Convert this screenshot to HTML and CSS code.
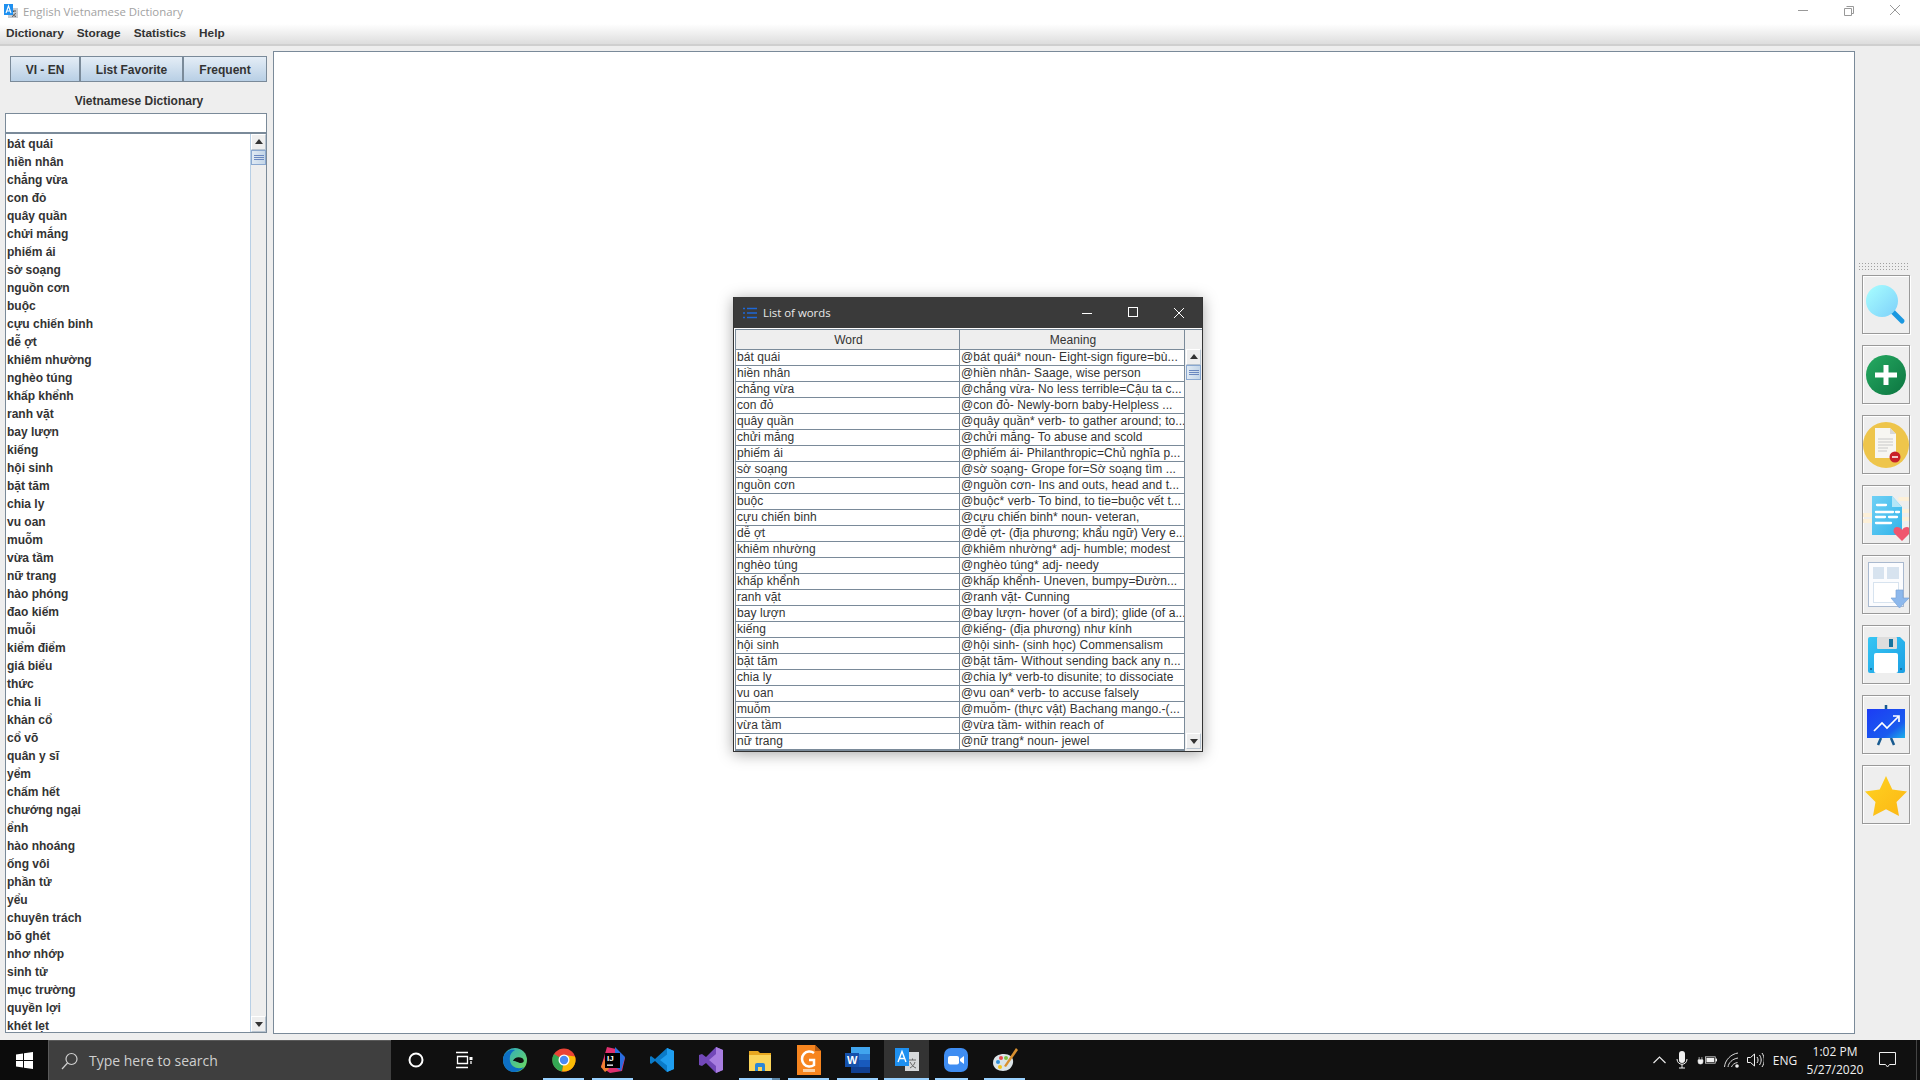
FILE: index.html
```html
<!DOCTYPE html>
<html lang="vi">
<head>
<meta charset="utf-8">
<title>English Vietnamese Dictionary</title>
<link rel="stylesheet" href="styles.css">
</head>
<body>
<header class="titlebar">
  <svg class="app-icon" width="16" height="16" viewBox="0 0 16 16"><rect x="5" y="5" width="10" height="10" fill="#c9ccd0"/><path d="M8 8h5M10.500 8v1M9 10c1 2 2 3 4 3.500M12.500 10c-.6 1.600-1.800 3-3.500 3.500" stroke="#555" fill="none"/><rect x="1" y="1" width="9" height="11" fill="#1e90f0"/><path d="M3 10l2.500-7L8 10M3.800 8h3.400" stroke="#fff" fill="none" stroke-width="1.100"/></svg>
  <span class="app-title">English Vietnamese Dictionary</span>
  <div class="win-controls">
    <svg width="46" height="24" viewBox="0 0 46 24"><path d="M18 10.500h10" stroke="#999"/></svg>
    <svg width="46" height="24" viewBox="0 0 46 24"><path d="M20.500 6.500h7v7h-2M18.500 8.500h7v7h-7z" stroke="#999" fill="none"/></svg>
    <svg width="46" height="24" viewBox="0 0 46 24"><path d="M18 5l10 10M28 5L18 15" stroke="#999" fill="none"/></svg>
  </div>
</header>
<nav class="menubar"><span>Dictionary</span><span>Storage</span><span>Statistics</span><span>Help</span></nav>
<div class="workspace">
  <aside class="left">
    <div class="tabs"><button class="tab t1">VI - EN</button><button class="tab t2">List Favorite</button><button class="tab t3">Frequent</button></div>
    <div class="dict-label">Vietnamese Dictionary</div>
    <div class="search-input"></div>
    <div class="listbox">
      <ul class="words">
        <li>bát quái</li><li>hiền nhân</li><li>chẳng vừa</li><li>con đỏ</li><li>quây quần</li><li>chửi mắng</li><li>phiếm ái</li><li>sờ soạng</li><li>nguồn cơn</li><li>buộc</li>
        <li>cựu chiến binh</li><li>dễ ợt</li><li>khiêm nhường</li><li>nghèo túng</li><li>khấp khểnh</li><li>ranh vặt</li><li>bay lượn</li><li>kiếng</li><li>hội sinh</li><li>bặt tăm</li>
        <li>chia ly</li><li>vu oan</li><li>muỗm</li><li>vừa tầm</li><li>nữ trang</li><li>hào phóng</li><li>đao kiếm</li><li>muỗi</li><li>kiểm điểm</li><li>giá biểu</li>
        <li>thức</li><li>chia li</li><li>khản cổ</li><li>cổ võ</li><li>quân y sĩ</li><li>yểm</li><li>chấm hết</li><li>chướng ngại</li><li>ểnh</li><li>hào nhoáng</li>
        <li>ống vôi</li><li>phần tử</li><li>yểu</li><li>chuyên trách</li><li>bõ ghét</li><li>nhơ nhớp</li><li>sinh tử</li><li>mục trường</li><li>quyền lợi</li><li>khét lẹt</li>
      </ul>
      <div class="scrollbar sb-large">
        <div class="sb-btn"><i class="arrow up"></i></div>
        <div class="sb-thumb"><i></i><i></i><i></i></div>
        <div class="sb-track"></div>
        <div class="sb-btn"><i class="arrow down"></i></div>
      </div>
    </div>
  </aside>
  <main class="canvas"></main>
  <aside class="toolbar">
    <div class="grip"></div>
    <button class="tool"><svg width="46" height="57" viewBox="1 1 46 57"><defs><linearGradient id="g1" x1="0" y1="0" x2="1" y2="1"><stop offset="0" stop-color="#a8ffff"/><stop offset="1" stop-color="#7ed0fa"/></linearGradient></defs><path d="M31 37l9 9" stroke="#1a98e0" stroke-width="5" stroke-linecap="round"/><circle cx="20" cy="26" r="16" fill="url(#g1)"/></svg></button>
    <button class="tool"><svg width="46" height="57" viewBox="1 1 46 57"><defs><linearGradient id="g2" x1="0" y1="0" x2="1" y2="1"><stop offset="0" stop-color="#26ab62"/><stop offset="1" stop-color="#0c7440"/></linearGradient></defs><circle cx="24" cy="30" r="20" fill="url(#g2)"/><path d="M24 20v20M13 30h22" stroke="#fff" stroke-width="5"/></svg></button>
    <button class="tool"><svg width="46" height="57" viewBox="1 1 46 57"><circle cx="24" cy="30" r="23" fill="#eec54b"/><path d="M13 13h15l6 6v24H13z" fill="#f7f6f2"/><path d="M28 13l6 6h-6z" fill="#d8d8d8"/><path d="M16 24h15M16 27h15M16 30h15M16 33h10M16 36h9" stroke="#c8c8c8"/><circle cx="33" cy="42" r="5.500" fill="#c8202a"/><path d="M30 42h6" stroke="#fff" stroke-width="1.500"/></svg></button>
    <button class="tool"><svg width="46" height="57" viewBox="1 1 46 57"><defs><linearGradient id="g4" x1="0" y1="0" x2="1" y2="1"><stop offset="0" stop-color="#6fd0f5"/><stop offset="1" stop-color="#31b4ea"/></linearGradient></defs><path d="M2 30h8M2 36h8M38 14h10M40 26h8M40 34h8" stroke="#fdf0d8" stroke-width="4" stroke-linecap="round"/><path d="M10 11h20l10 11v28H10z" fill="url(#g4)"/><path d="M30 11l10 11H30z" fill="#b3e6f8"/><path d="M15 20h9M14 27h17M34 27h3M14 32h9M27 32h8M14 38h15" stroke="#fff" stroke-width="2.300" stroke-linecap="round"/><path d="M40 56l-7-7c-3-3-1-7 2-7 2 0 4 1 5 3 1-2 3-3 5-3 3 0 5 4 2 7z" fill="#f0566e"/></svg></button>
    <button class="tool"><svg width="46" height="57" viewBox="1 1 46 57"><rect x="6.500" y="7.500" width="35" height="44" fill="#fbfcfe" stroke="#a9b9cf"/><rect x="11" y="12" width="11" height="12" fill="#d7e3ef"/><rect x="25" y="12" width="12" height="12" fill="#d7e3ef"/><rect x="11.500" y="27.500" width="25" height="20" fill="#fff" stroke="#d7e3ef"/><path d="M34 35h7v8h6L37.500 53 29 43h5z" fill="#8db8ec" stroke="#7ba5d9" stroke-width=".7"/></svg></button>
    <button class="tool"><svg width="46" height="57" viewBox="1 1 46 57"><defs><linearGradient id="g6" x1="0" y1="0" x2="1" y2="1"><stop offset="0" stop-color="#36c6f4"/><stop offset="1" stop-color="#1c9fe3"/></linearGradient></defs><path d="M8 12h30l5 5v29a2 2 0 0 1-2 2H8a2 2 0 0 1-2-2V14a2 2 0 0 1 2-2z" fill="url(#g6)"/><rect x="15" y="12" width="20" height="12" rx="1" fill="#ddd"/><rect x="27" y="14" width="4" height="8" fill="#15729e"/><rect x="12" y="28" width="24" height="20" rx="2" fill="#fff"/><circle cx="9" cy="44" r="1" fill="#125c88"/><circle cx="39" cy="44" r="1" fill="#125c88"/></svg></button>
    <button class="tool"><svg width="46" height="57" viewBox="1 1 46 57"><defs><linearGradient id="g7" x1="0" y1="0" x2="1" y2="1"><stop offset="0" stop-color="#1c3cf5"/><stop offset=".7" stop-color="#1a5bee"/><stop offset="1" stop-color="#1cb0e8"/></linearGradient></defs><path d="M24 10v5M19 43l-3 7M29 43l3 7" stroke="#185a90" stroke-width="2.500"/><rect x="5" y="14" width="38" height="29" fill="url(#g7)"/><path d="M12 36l8-8 5 5 11-11M31 21h6v6" stroke="#fff" stroke-width="1.700" fill="none"/></svg></button>
    <button class="tool"><svg width="46" height="57" viewBox="1 1 46 57"><defs><linearGradient id="g8" x1="0" y1="0" x2="1" y2="1"><stop offset="0" stop-color="#ffd321"/><stop offset="1" stop-color="#fcb614"/></linearGradient></defs><path d="M24 11l6.300 13.500L45 26.500 34.500 37l2.500 14-13-6.800L11 51l2.500-14L3 26.500l14.700-2z" fill="url(#g8)"/></svg></button>
  </aside>

  <section class="window">
    <div class="win-title">
      <svg width="14" height="12" viewBox="0 0 14 12"><path d="M0 1.500h2M4 1.500h10M0 6h2M4 6h10M0 10.500h2M4 10.500h10" stroke="#1e68d8" stroke-width="1.600"/></svg>
      <span>List of words</span>
      <div class="win-buttons">
        <svg width="46" height="30" viewBox="0 0 46 30"><path d="M18 15.500h10" stroke="#fff"/></svg>
        <svg width="46" height="30" viewBox="0 0 46 30"><rect x="18.500" y="9.500" width="9" height="9" fill="none" stroke="#fff"/></svg>
        <svg width="46" height="30" viewBox="0 0 46 30"><path d="M18 10l10 10M28 10L18 20" stroke="#fff" fill="none"/></svg>
      </div>
    </div>
    <div class="win-body">
      <table class="grid">
        <thead><tr><th>Word</th><th>Meaning</th></tr></thead>
        <tbody>
          <tr><td>bát quái</td><td>@bát quái* noun- Eight-sign figure=bù...</td></tr>
          <tr><td>hiền nhân</td><td>@hiền nhân- Saage, wise person</td></tr>
          <tr><td>chẳng vừa</td><td>@chẳng vừa- No less terrible=Cậu ta c...</td></tr>
          <tr><td>con đỏ</td><td>@con đỏ- Newly-born baby-Helpless ...</td></tr>
          <tr><td>quây quần</td><td>@quây quần* verb- to gather around; to...</td></tr>
          <tr><td>chửi mắng</td><td>@chửi mắng- To abuse and scold</td></tr>
          <tr><td>phiếm ái</td><td>@phiếm ái- Philanthropic=Chủ nghĩa p...</td></tr>
          <tr><td>sờ soạng</td><td>@sờ soạng- Grope for=Sờ soạng tìm ...</td></tr>
          <tr><td>nguồn cơn</td><td>@nguồn cơn- Ins and outs, head and t...</td></tr>
          <tr><td>buộc</td><td>@buộc* verb- To bind, to tie=buộc vết t...</td></tr>
          <tr><td>cựu chiến binh</td><td>@cựu chiến binh* noun- veteran,</td></tr>
          <tr><td>dễ ợt</td><td>@dễ ợt- (địa phương; khẩu ngữ) Very e...</td></tr>
          <tr><td>khiêm nhường</td><td>@khiêm nhường* adj- humble; modest</td></tr>
          <tr><td>nghèo túng</td><td>@nghèo túng* adj- needy</td></tr>
          <tr><td>khấp khểnh</td><td>@khấp khểnh- Uneven, bumpy=Đườn...</td></tr>
          <tr><td>ranh vặt</td><td>@ranh vặt- Cunning</td></tr>
          <tr><td>bay lượn</td><td>@bay lượn- hover (of a bird); glide (of a...</td></tr>
          <tr><td>kiếng</td><td>@kiếng- (địa phương) như kính</td></tr>
          <tr><td>hội sinh</td><td>@hội sinh- (sinh học) Commensalism</td></tr>
          <tr><td>bặt tăm</td><td>@bặt tăm- Without sending back any n...</td></tr>
          <tr><td>chia ly</td><td>@chia ly* verb-to disunite; to dissociate</td></tr>
          <tr><td>vu oan</td><td>@vu oan* verb- to accuse falsely</td></tr>
          <tr><td>muỗm</td><td>@muỗm- (thực vật) Bachang mango.-(...</td></tr>
          <tr><td>vừa tầm</td><td>@vừa tầm- within reach of</td></tr>
          <tr><td>nữ trang</td><td>@nữ trang* noun- jewel</td></tr>
        </tbody>
      </table>
      <div class="grid-side">
        <div class="corner"></div>
        <div class="scrollbar sb-small">
          <div class="sb-btn"><i class="arrow up"></i></div>
          <div class="sb-thumb"><i></i><i></i><i></i></div>
          <div class="sb-track"></div>
          <div class="sb-btn"><i class="arrow down"></i></div>
        </div>
      </div>
    </div>
  </section>
</div>
<footer class="taskbar">
  <div class="start"><svg width="17" height="17" viewBox="0 0 17 17"><path d="M0 2.400l7-1v6.600H0zM8 1.200L17 0v8H8zM0 9h7v6.600l-7-1zM8 9h9v8l-9-1.200z" fill="#fff"/></svg></div>
  <div class="searchbox"><svg width="18" height="18" viewBox="0 0 18 18"><circle cx="10.500" cy="7" r="5.500" fill="none" stroke="#d0d0d0" stroke-width="1.200"/><path d="M6.500 11l-5.500 6" stroke="#d0d0d0" stroke-width="1.200"/></svg><span>Type here to search</span></div>
  <div class="task cortana"><svg width="16" height="16" viewBox="0 0 16 16"><circle cx="8" cy="8" r="6.500" fill="none" stroke="#fff" stroke-width="2"/></svg></div>
  <div class="task taskview"><svg width="18" height="18" viewBox="0 0 18 18"><path d="M1 1.500h12M1 16.500h12M2.500 5.500h10v7h-10zM16 10v3" stroke="#fff" fill="none" stroke-width="1.300"/><rect x="14.500" y="6" width="3" height="3" fill="#fff"/></svg></div>
  <div class="task"><svg width="24" height="24" viewBox="0 0 24 24"><defs><linearGradient id="e1" x1="0" y1="0" x2="1" y2="1"><stop offset="0" stop-color="#2ba8c8"/><stop offset="1" stop-color="#6fdc58"/></linearGradient></defs><circle cx="12" cy="12" r="12" fill="url(#e1)"/><path d="M0 12C0 6 5 1 12 2 8 4 6 8 7 13c1 6 8 9 14 6-3 4-7 5-10 5C4 24 0 18 0 12z" fill="#0d6fc4"/><path d="M10 13c1-3 5-5 9-3 3 2 2 5-1 5-3 0-4-2-8-2z" fill="#101010"/></svg></div>
  <div class="task running"><svg width="24" height="24" viewBox="0 0 24 24"><circle cx="12" cy="12" r="11.500" fill="#ea4335"/><path d="M12 12L2 6a11.500 11.500 0 0 0 8 17.500z" fill="#34a853"/><path d="M12 12l-1.800 11.400A11.500 11.500 0 0 0 23 8.500L12 7z" fill="#fbbc05"/><circle cx="12" cy="12" r="5.500" fill="#fff"/><circle cx="12" cy="12" r="4.200" fill="#4a8af4"/></svg></div>
  <div class="task running"><svg width="24" height="26" viewBox="0 0 24 26"><path d="M6 0l9 2 9 9-3 13-12 2-9-6z" fill="#e03070"/><path d="M14 0l10 10-4 14-6-4z" fill="#2a6de0"/><path d="M0 20l3-8 5 10-4 3z" fill="#f08030"/><rect x="4" y="6" width="15" height="15" fill="#000"/><text class="ij" x="6" y="14">IJ</text><rect x="6" y="17.500" width="6" height="1.300" fill="#fff"/></svg></div>
  <div class="task"><svg width="24" height="24" viewBox="0 0 24 24"><path d="M17 0l7 3v18l-7 3L5 13 1 16l-1-1v-6l1-1 4 3z" fill="#0a7ac8"/><path d="M17 0l7 3v18l-7 3zM17 6.500L10 12l7 5.500z" fill="#1f9ef0" fill-rule="evenodd"/></svg></div>
  <div class="task"><svg width="24" height="26" viewBox="0 0 24 26"><path d="M17 0l7 3v20l-7 3L7 16l-4 3-3-1V8l3-1 4 3z" fill="#7248b8"/><path d="M17 0l7 3v20l-7 3zM17 7l-7 6 7 6z" fill="#a87ee0" fill-rule="evenodd"/></svg></div>
  <div class="task running split"><svg width="22" height="21" viewBox="0 0 22 21"><path d="M0 1h9l2 2h11v18H0z" fill="#e8a820"/><path d="M0 5h22v16H0z" fill="#fbd55a"/><path d="M6 21v-6a2 2 0 0 1 2-2h6a2 2 0 0 1 2 2v6h-3v-4H9v4z" fill="#2c87d6"/></svg></div>
  <div class="task running"><svg width="24" height="30" viewBox="0 0 24 30"><path d="M0 0h18l6 6v24H0z" fill="#f7851f"/><path d="M18 0l6 6h-6z" fill="#b65b12"/><path d="M17 8a7.500 7.500 0 1 0 0 12v-5h-5" fill="none" stroke="#fff" stroke-width="2.500"/><rect x="6" y="24" width="12" height="3" fill="#fbd0a4"/></svg></div>
  <div class="task running"><svg width="25" height="26" viewBox="0 0 25 26"><rect x="6" y="0" width="19" height="26" rx="1" fill="#2b7cd3"/><rect x="6" y="0" width="19" height="7" fill="#41a5ee"/><rect x="6" y="13" width="19" height="7" fill="#185abd"/><rect x="6" y="20" width="19" height="6" fill="#103f91"/><rect x="0" y="6" width="14" height="14" fill="#1551ab"/><text class="wd" x="2" y="17">W</text></svg></div>
  <div class="task active"><svg width="24" height="24" viewBox="0 0 24 24"><rect x="10" y="4" width="14" height="19" fill="#d6d8da"/><path d="M14 12h7M17.500 10.500v1.500M15 14c2 3 3 5 6 6M20 14c-1 3-2 4-5 6" stroke="#666" fill="none"/><rect x="0" y="0" width="14" height="18" fill="#1e90f0"/><path d="M3 14L7 3.500 11 14M4.500 10.500h5" stroke="#fff" stroke-width="1.400" fill="none"/></svg></div>
  <div class="task running short"><svg width="24" height="24" viewBox="0 0 24 24"><rect width="24" height="24" rx="7" fill="#3f8df2"/><rect x="4" y="8" width="11" height="8.500" rx="2" fill="#fff"/><path d="M16 11l4-3v8l-4-3z" fill="#fff"/></svg></div>
  <div class="task running"><svg width="26" height="26" viewBox="0 0 26 26"><path d="M1 16C1 9 7 7 12 7s10 3 9 9c-1 5-5 8-10 8S1 21 1 16z" fill="#dbe4e8"/><circle cx="6" cy="15" r="2" fill="#2f8fd8"/><circle cx="9" cy="11" r="2" fill="#e64848"/><circle cx="14" cy="11" r="2" fill="#7cc140"/><circle cx="8" cy="20" r="2" fill="#f5c518"/><path d="M24 1L12 19l2 1L26 3z" fill="#d89030"/></svg></div>
  <div class="tray">
    <div class="t-chev"><svg width="13" height="8" viewBox="0 0 13 8"><path d="M.5 7l6-6 6 6" stroke="#e8e8e8" fill="none" stroke-width="1.200"/></svg></div>
    <div class="t-mic"><svg width="12" height="18" viewBox="0 0 12 18"><rect x="3" y="0" width="6" height="12" rx="3" fill="#f0f0f0"/><path d="M1 8c0 7 10 7 10 0M6 13v4M3 17h6" stroke="#f0f0f0" fill="none"/></svg></div>
    <div class="t-bat"><svg class="plug" width="7" height="11" viewBox="0 0 10 16"><path d="M3 3v4M7 3v4M1.500 7h7v3a3 3 0 0 1-3 3h-1a3 3 0 0 1-3-3z" stroke="#f0f0f0" fill="#f0f0f0"/></svg><svg width="12" height="8" viewBox="0 0 17 10"><rect x=".5" y=".5" width="14" height="9" fill="none" stroke="#f0f0f0"/><rect x="2" y="2" width="11" height="6" fill="#f0f0f0"/><rect x="15" y="3" width="2" height="4" fill="#f0f0f0"/></svg></div>
    <div class="t-wifi"><svg width="16" height="16" viewBox="0 0 16 16"><path d="M.5 15C1 8 7 2 14 1M4 15c.5-4 4-8 10-9M7.500 15c.5-2 3-4 6-4.500" stroke="#d8d8d8" fill="none"/><circle cx="13" cy="14" r="1.800" fill="#f0f0f0"/></svg></div>
    <div class="t-vol"><svg width="17" height="16" viewBox="0 0 17 16"><path d="M.5 5.500h3l4-3.500v12l-4-3.500h-3zM10 5c1.400 2 1.400 4 0 6M12.500 3c2.200 3.400 2.200 6.600 0 10M15 1c3 4.600 3 9.400 0 14" stroke="#f0f0f0" fill="none"/></svg></div>
    <div class="t-lang">ENG</div>
    <div class="t-clock"><span>1:02 PM</span><span>5/27/2020</span></div>
    <div class="t-note"><svg width="17" height="16" viewBox="0 0 17 16"><path d="M.5.500h16v12h-6l-2 2.500-2-2.500h-6z" stroke="#f0f0f0" fill="none"/></svg></div>
    <div class="t-peek"></div>
  </div>
</footer>
</body>
</html>
```

FILE: styles.css
```css
* { box-sizing: border-box; }
html, body { margin: 0; width: 1920px; height: 1080px; overflow: hidden; }
body {
  display: flex;
  flex-direction: column;
  background: #eeeeee;
  font-family: "Liberation Sans", "Noto Sans", sans-serif;
  font-size: 12px;
  color: #333333;
}

/* title bar */
.titlebar { height: 24px; display: flex; align-items: center; background: #fff; flex: none; }
.app-icon { margin: 0 0 2px 3px; }
.app-title { margin-left: 4px; font-family: "Open Sans", sans-serif; font-size: 11.400px; color: #a2a2a2; padding-bottom: 2px; }
.win-controls { margin-left: auto; display: flex; margin-right: 2px; }
.win-controls svg { display: block; }

/* menu */
.menubar {
  height: 22px; flex: none; display: flex; gap: 13px; align-items: center;
  padding: 0 0 2px 6px;
  background: linear-gradient(#ffffff, #dddddd);
  border-bottom: 2px solid #cfcfcf;
  font-weight: bold;
  font-size: 11.800px;
}

.workspace { flex: 1; display: flex; position: relative; min-height: 0; }

/* left column */
.left { width: 273px; flex: none; padding: 10px 6px 7px 5px; display: flex; flex-direction: column; }
.tabs { display: flex; margin-left: 5px; height: 26px; flex: none; }
.tab {
  height: 26px; padding: 2px 0 0; margin: 0;
  border: 1px solid #7a8a99;
  background: linear-gradient(#e4edf6, #b8cfe5);
  font: bold 12px "Liberation Sans", sans-serif;
  color: #333;
}
.t1 { width: 70px; }
.t2 { width: 103px; }
.t3 { width: 84px; }
.dict-label { height: 31px; flex: none; display: flex; align-items: center; justify-content: center; font-weight: bold; padding: 6px 0 0 6px; }
.search-input { height: 20px; flex: none; background: #fff; border: 1px solid #7a8a99; }
.listbox { flex: 1; min-height: 0; display: flex; border: 1px solid #7a8a99; background: #fff; overflow: hidden; }
.words { list-style: none; margin: 0; padding: 1px 0 0 1px; flex: 1; overflow: hidden; font-weight: bold; }
.words li { height: 18px; line-height: 18px; white-space: nowrap; }

/* scrollbars */
.scrollbar { display: flex; flex-direction: column; background: #eeeeee; border-left: 1px solid #b8cfe5; }
.sb-large { width: 16px; flex: none; }
.sb-btn { height: 16px; flex: none; display: flex; align-items: center; justify-content: center; background: #eee; border: 1px solid #fff; border-bottom-color: #b8c4d0; border-right-color: #b8c4d0; }
.arrow { width: 0; height: 0; border-left: 4.500px solid transparent; border-right: 4.500px solid transparent; }
.arrow.up { border-bottom: 5px solid #333; margin-bottom: 2px; }
.arrow.down { border-top: 5px solid #333; margin-top: 1px; }
.sb-thumb { height: 15px; flex: none; display: flex; flex-direction: column; justify-content: center; gap: 1px; align-items: center; background: linear-gradient(90deg, #dfe9f3, #c4d6e8); border: 1px solid #8aa8d0; }
.sb-thumb i { display: block; width: 10px; height: 1px; background: #6a88c0; }
.sb-track { flex: 1; }

/* central area */
.canvas { width: 1582px; flex: none; margin: 5px 0 6px 0; background: #fff; border: 1px solid #7a8a99; }

/* toolbar */
.toolbar { flex: 1; padding: 216px 0 0 3px; display: flex; flex-direction: column; }
.grip {
  width: 52px; height: 10px; margin-bottom: 3px;
  background-image: radial-gradient(#a0a0a0 .9px, transparent 1px);
  background-size: 3px 3px;
}
.tool {
  width: 48px; height: 59px; padding: 0; margin: 0 0 11px 4px;
  background: #eeeeee; border: 1px solid #999; box-shadow: 1px 1px 0 #fff, inset 1px 1px 0 #fff;
  display: flex; align-items: center; justify-content: center;
}
.tool svg { display: block; }

/* floating window */
.window {
  position: absolute; left: 733px; top: 251px; width: 470px; height: 455px;
  background: #eeeeee; border: 1px solid #333; border-top: none;
  box-shadow: 0 2px 14px rgba(0,0,0,.35);
  display: flex; flex-direction: column;
}
.win-title { height: 31px; flex: none; background: #3a3a3a; color: #e8e8e8; display: flex; align-items: center; padding-left: 9px; font-family: "Open Sans", sans-serif; font-size: 11.400px; }
.win-title span { margin-left: 6px; }
.win-buttons { margin-left: auto; display: flex; }
.win-body { flex: 1; display: flex; padding: 1px 0 0 1px; align-items: flex-start; background: #fff; min-height: 0; }
.grid { border-collapse: collapse; table-layout: fixed; width: 450px; flex: none; background: #fff; margin: 0; letter-spacing: .07px; }
.grid th { height: 20px; padding: 0 0 0 2px; background: #eeeeee; font-weight: normal; font-size: 12px; border: 1px solid #7a8a99; }
.grid td { height: 16px; line-height: 15px; padding: 0 0 0 1px; border: 1px solid #7a8a99; border-top: none; white-space: nowrap; overflow: hidden; }
.grid th:first-child, .grid td:first-child { width: 224px; }
.grid tbody tr:last-child td { border-bottom-width: 2px; }
.grid-side { flex: 1; display: flex; flex-direction: column; background: #eee; height: 100%; }
.corner { height: 20px; flex: none; background: #eee; border-top: 1px solid #7a8a99; }
.sb-small { height: 400px; width: 15px; margin-left: 1px; border-left: none; }

/* taskbar */
.taskbar { height: 40px; flex: none; display: flex; background: #101010; color: #f0f0f0; font-family: "Open Sans", sans-serif; }
.start { width: 48px; flex: none; display: flex; align-items: center; justify-content: center; background: #0c0c0c; }
.searchbox { width: 343px; flex: none; display: flex; align-items: center; background: #3f3f3f; border: 1px solid #5a5a5a; border-bottom: none; border-right: none; padding-left: 12px; color: #cfcfcf; font-size: 14px; }
.searchbox span { margin-left: 10px; }
.task { width: 49px; flex: none; display: flex; align-items: center; justify-content: center; position: relative; }
.cortana { width: 49.100px; }
.taskview { width: 50.100px; }
.taskview svg { margin-right: 2px; }
.running::after { content: ""; position: absolute; left: 4px; right: 4px; bottom: 0; height: 2px; background: #99d1ff; }
.split::before { content: ""; position: absolute; right: 4px; width: 8px; bottom: 0; height: 2px; background: #5d88a8; z-index: 1; }
.short::after { right: 12px; }
.active { background: #333333; width: 45px; margin: 0 2px; }
.active::after { content: ""; position: absolute; left: 0; right: 0; bottom: 0; height: 2px; background: #99d1ff; }
.ij { font: bold 8px "Liberation Sans", sans-serif; fill: #fff; }
.wd { font: bold 11px "Liberation Sans", sans-serif; fill: #fff; }
.tray { margin-left: auto; display: flex; align-items: center; height: 100%; font-size: 12px; color: #f0f0f0; }
.tray > div { display: flex; align-items: center; justify-content: center; height: 100%; flex: none; }
.t-chev { width: 24px; } .t-mic { width: 22px; } .t-bat { width: 27px; } .t-wifi { width: 24px; } .t-vol { width: 23px; }
.plug { margin-right: 1px; }
.t-lang { width: 36px; }
.tray .t-clock { width: 64px; flex-direction: column; line-height: 18px; padding-top: 1px; }
.t-note { width: 40px; }
.t-peek { width: 13px; position: relative; }
.t-peek::after { content: ""; position: absolute; right: 3px; top: 0; bottom: 0; width: 1px; background: #444; }
```
